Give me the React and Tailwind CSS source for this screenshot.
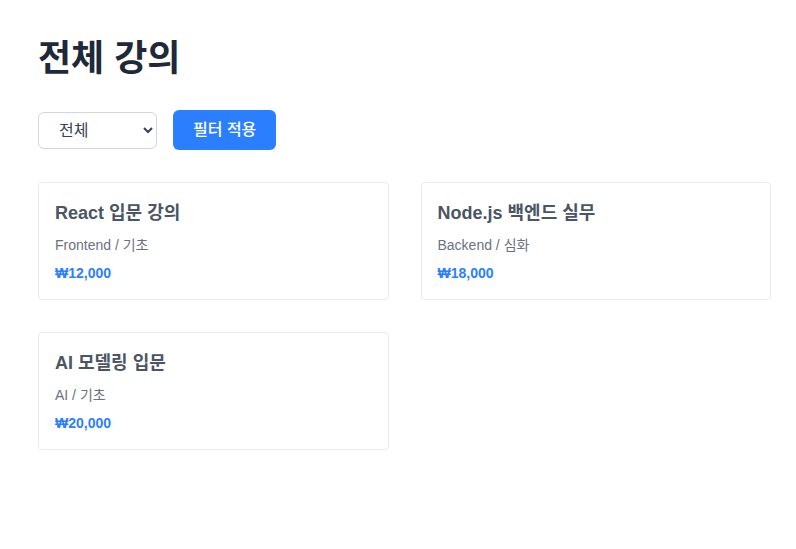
const courses = [
  { title: "React 입문 강의", meta: "Frontend / 기초", price: "₩12,000" },
  { title: "Node.js 백엔드 실무", meta: "Backend / 심화", price: "₩18,000" },
  { title: "AI 모델링 입문", meta: "AI / 기초", price: "₩20,000" },
];

function CourseCard({ title, meta, price }) {
  return (
    <article className="rounded border border-[#ebebeb] p-4">
      <h2 className="mb-2 text-lg leading-7 font-bold text-gray-600">{title}</h2>
      <p className="mb-2 text-sm leading-5 text-gray-500">{meta}</p>
      <p className="text-sm leading-5 font-bold text-[#2b7fff]">{price}</p>
    </article>
  );
}

export default function App() {
  return (
    <main className="min-h-screen bg-white pt-9 pr-[25px] pb-8 pl-[38px] font-['Liberation_Sans','Noto_Sans_CJK_KR',sans-serif]">
      <h1 className="mb-7 text-4xl leading-[46px] font-bold text-gray-800">전체 강의</h1>
      <form className="mb-8 flex items-center gap-4" onSubmit={(e) => e.preventDefault()}>
        <select aria-label="강의 분류" className="h-[37px] w-[119px] rounded-md border border-gray-300 bg-white px-4 text-base text-gray-700">
          <option>전체</option>
          <option>Frontend</option>
          <option>Backend</option>
          <option>AI</option>
        </select>
        <button type="submit" className="h-10 rounded-md bg-[#2b7fff] px-5 text-base font-medium text-white">
          필터 적용
        </button>
      </form>
      <section className="grid grid-cols-2 gap-8">
        {courses.map((c) => (
          <CourseCard key={c.title} {...c} />
        ))}
      </section>
    </main>
  );
}
